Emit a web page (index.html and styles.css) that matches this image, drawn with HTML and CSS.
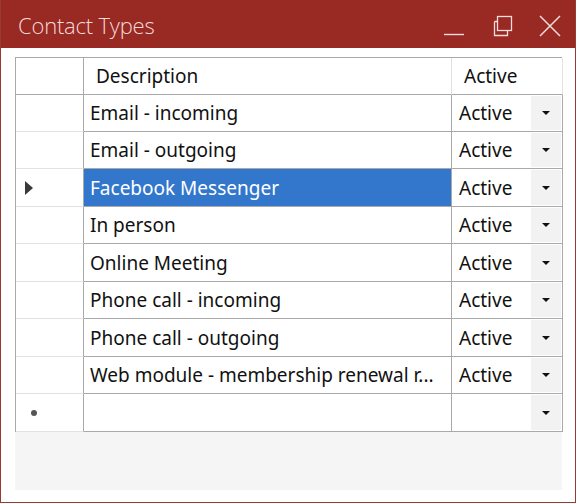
FILE: index.html
```html
<!DOCTYPE html>
<html>
<head>
<meta charset="utf-8">
<link rel="stylesheet" href="styles.css">
</head>
<body>
<div class="window">
  <div class="titlebar">
    <span class="title">Contact Types</span>
    <div class="controls">
      <svg class="btn" width="22" height="22" viewBox="0 0 22 22"><line x1="1" y1="19.5" x2="21" y2="19.5" stroke="#f6dcda" stroke-width="1.4"/></svg>
      <svg class="btn" width="22" height="22" viewBox="0 0 22 22"><rect x="6.5" y="1.5" width="14" height="14" fill="none" stroke="#f6dcda" stroke-width="1.3"/><path d="M3.5 6.5 V20.5 H16.5 V15.5 M6.5 6.5 H3.5" fill="none" stroke="#f6dcda" stroke-width="1.3"/></svg>
      <svg class="btn" width="22" height="22" viewBox="0 0 22 22"><path d="M1 1 L21 21 M21 1 L1 21" stroke="#f6dcda" stroke-width="1.5"/></svg>
    </div>
  </div>
  <div class="content">
    <div class="gridview">
      <div class="grid">
        <div class="rh hdr"></div>
        <div class="ch hdr desc">Description</div>
        <div class="ch hdr act">Active</div>

        <div class="rh"></div><div class="cell">Email - incoming</div><div class="cell combo"><span>Active</span><i class="dd"><b></b></i></div>
        <div class="rh"></div><div class="cell">Email - outgoing</div><div class="cell combo"><span>Active</span><i class="dd"><b></b></i></div>
        <div class="rh cur"><b class="arrow"></b></div><div class="cell sel">Facebook Messenger</div><div class="cell combo"><span>Active</span><i class="dd"><b></b></i></div>
        <div class="rh"></div><div class="cell">In person</div><div class="cell combo"><span>Active</span><i class="dd"><b></b></i></div>
        <div class="rh"></div><div class="cell">Online Meeting</div><div class="cell combo"><span>Active</span><i class="dd"><b></b></i></div>
        <div class="rh"></div><div class="cell">Phone call - incoming</div><div class="cell combo"><span>Active</span><i class="dd"><b></b></i></div>
        <div class="rh"></div><div class="cell">Phone call - outgoing</div><div class="cell combo"><span>Active</span><i class="dd"><b></b></i></div>
        <div class="rh"></div><div class="cell">Web module - membership renewal r...</div><div class="cell combo"><span>Active</span><i class="dd"><b></b></i></div>
        <div class="rh newrow"><b class="star"></b></div><div class="cell"></div><div class="cell combo"><span></span><i class="dd"><b></b></i></div>
      </div>
    </div>
  </div>
</div>
</body>
</html>
```
FILE: styles.css
```css
html, body {
  margin: 0;
  padding: 0;
  background: #ffffff;
}
body {
  width: 580px;
  height: 504px;
  overflow: hidden;
  font-family: "Noto Sans", "Open Sans", sans-serif;
}
.window {
  width: 574px;
  height: 502px;
  border: 1px solid #9a3a34;
  border-top: none;
  background: #ffffff;
  display: flex;
  flex-direction: column;
}
.titlebar {
  height: 48px;
  background: #992923;
  display: flex;
  align-items: center;
  justify-content: space-between;
  padding: 0 14px 0 17px;
  box-sizing: border-box;
  flex: none;
}
.title {
  color: #f5dad8;
  font-family: "Open Sans", "Noto Sans", sans-serif;
  font-weight: 300;
  font-size: 22px;
  letter-spacing: -0.2px;
  margin-top: 2px;
}
.controls {
  display: flex;
  gap: 26px;
  align-items: center;
  margin-top: 3px;
}
.btn { display: block; }
.content {
  flex: 1;
  padding: 9px 12px 12px 14px;
}
.gridview {
  width: 547px;
  height: 433px;
  background: #f5f5f5;
}
.grid {
  display: grid;
  grid-template-columns: 68px 368px 111px;
  grid-template-rows: 37px 37px 37px 38px 37px 38px 37px 38px 37px 38px;
  border-top: 1px solid #a9a9a9;
  border-left: 1px solid #a9a9a9;
  background: #ffffff;
  box-sizing: border-box;
  width: 547px;
  font-size: 19px;
  color: #111111;
}
.grid > div {
  box-sizing: border-box;
  border-right: 1px solid #a9a9a9;
  border-bottom: 1px solid #a9a9a9;
  display: flex;
  align-items: center;
  white-space: nowrap;
  overflow: hidden;
}
.grid > .rh {
  border-bottom-color: #e2e2e2;
  border-right-color: #a9a9a9;
  padding-left: 9px;
}
.grid > .hdr {
  border-bottom-color: #a9a9a9;
}
.grid > .ch {
  border-right-color: #e2e2e2;
}
.desc { padding-left: 12px; }
.act { padding-left: 12px; }
.cell { padding-left: 6px; }
.grid > .cell.sel {
  background: #3277cc;
  color: #ffffff;
  border-bottom-color: #a9a9a9;
}
.combo {
  justify-content: space-between;
  padding-left: 7px !important;
  padding-right: 1px;
}
.dd {
  width: 30px;
  align-self: stretch;
  margin: 1px 0 1px 0;
  background: #f2f2f2;
  display: flex;
  align-items: center;
  justify-content: center;
}
.dd b {
  width: 0;
  height: 0;
  border-left: 4px solid transparent;
  border-right: 4px solid transparent;
  border-top: 4px solid #111111;
}
.arrow {
  width: 0;
  height: 0;
  border-top: 7px solid transparent;
  border-bottom: 7px solid transparent;
  border-left: 8px solid #3a3a3a;
}
.newrow { padding-left: 13px !important; }
.star {
  width: 6px;
  height: 6px;
  border-radius: 50%;
  background: #555555;
  margin-left: 2px;
}
```
